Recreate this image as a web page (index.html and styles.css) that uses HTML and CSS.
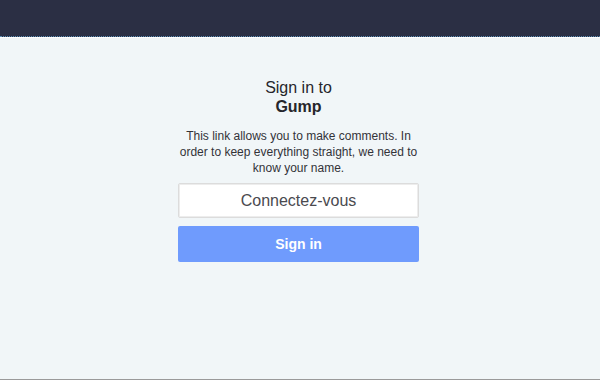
FILE: index.html
```html
<!DOCTYPE html>
<html lang="en">
<head>
<meta charset="utf-8">
<title>Sign in to Gump</title>
<link rel="stylesheet" href="styles.css">
</head>
<body>
<header class="topbar"></header>
<main class="page">
  <section class="signin">
    <h1 class="title">Sign in to<br><strong>Gump</strong></h1>
    <p class="lead">This link allows you to make comments. In order to keep everything straight, we need to know your name.</p>
    <form class="form">
      <input class="name-input" type="text" value="Connectez-vous">
      <button class="submit" type="button">Sign in</button>
    </form>
  </section>
</main>
<div class="bottomline"></div>
</body>
</html>
```
FILE: styles.css
```css
* { box-sizing: border-box; }
html, body {
  margin: 0;
  height: 100%;
}
body {
  background: #f1f6f8;
  font-family: "Liberation Sans", Arial, sans-serif;
  color: #2a2a2e;
  display: flex;
  flex-direction: column;
}
.topbar {
  height: 37px;
  background: #2b2f44;
  border-bottom: 1px dotted #5b8db5;
  box-shadow: 0 1px 0 #ffffff;
  flex: none;
}
.page {
  flex: 1;
  display: flex;
  justify-content: center;
  padding-top: 41px;
  padding-right: 3px;
}
.signin {
  width: 241px;
  display: flex;
  flex-direction: column;
  align-items: stretch;
  text-align: center;
}
.title {
  margin: 0;
  font-size: 16px;
  line-height: 19px;
  font-weight: normal;
  color: #26262b;
}
.title strong {
  font-weight: bold;
}
.lead {
  margin: 12px -4px 0;
  font-size: 12px;
  line-height: 16px;
  color: #333338;
}
.form {
  margin-top: 7px;
  display: flex;
  flex-direction: column;
  gap: 8px;
}
.name-input {
  height: 35px;
  width: 100%;
  margin: 0;
  border: 1px solid #dcdcdc;
  box-shadow: inset 0 0 0 1px #ededed;
  border-radius: 2px;
  background: #fff;
  text-align: center;
  font-family: "Liberation Sans", Arial, sans-serif;
  font-size: 16px;
  color: #4a4a4f;
  outline: none;
}
.submit {
  height: 36px;
  width: 100%;
  margin: 0;
  border: none;
  border-radius: 2px;
  background: #6f9bfd;
  color: #fff;
  font-family: "Liberation Sans", Arial, sans-serif;
  font-size: 14px;
  font-weight: bold;
}
.bottomline {
  flex: none;
  height: 1px;
  background: #9a9a9a;
}
```
